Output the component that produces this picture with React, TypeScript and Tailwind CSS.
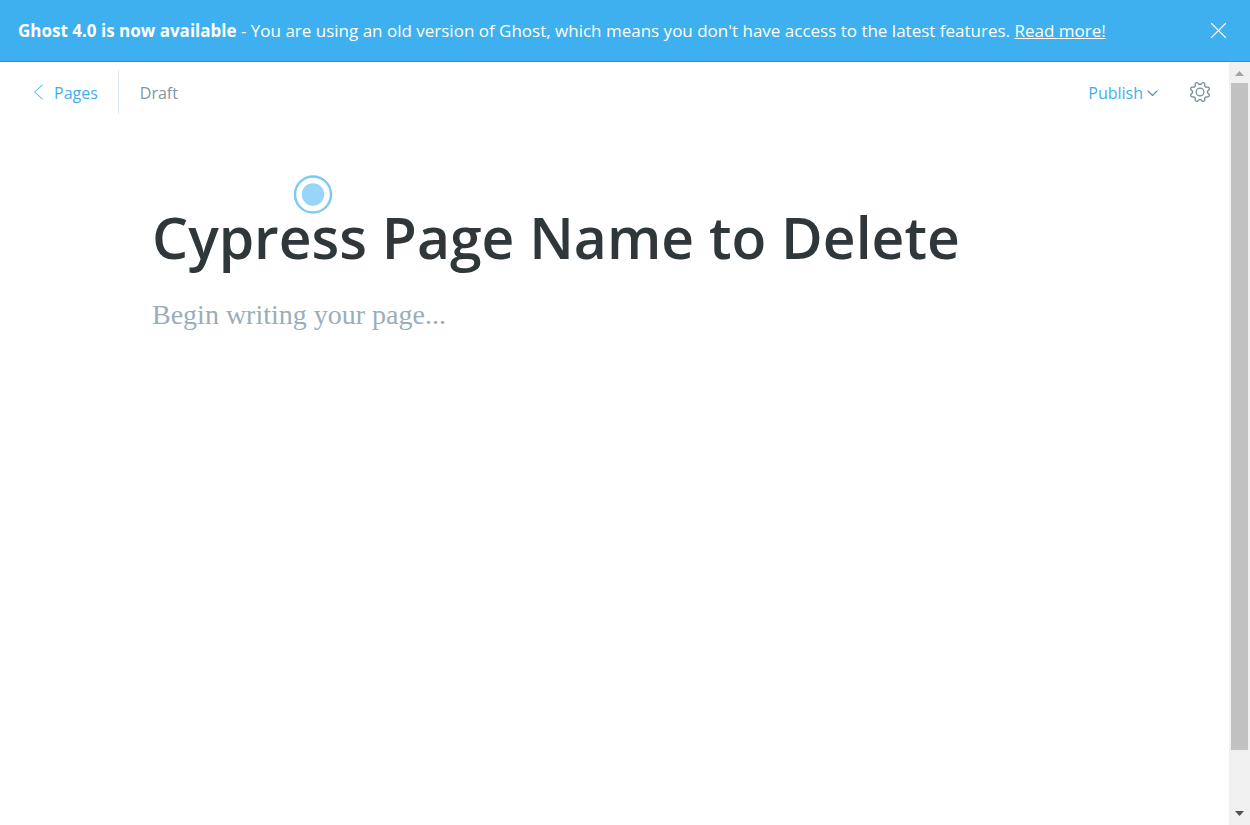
import React from "react";

function Banner() {
  return (
    <aside className="flex shrink-0 items-center justify-between border-b border-[#1896e2] bg-[#3eb0ef] pr-6 pl-[18px] text-[17px] text-white">
      <p className="pt-px leading-[60px] whitespace-nowrap">
        <strong className="font-bold">Ghost 4.0 is now available</strong>
        {" - You are using an old version of Ghost, which means you don't have access to the latest features. "}
        <a href="#upgrade" className="underline">Read more!</a>
      </p>
      <button type="button" aria-label="Dismiss">
        <svg className="size-[15px]" viewBox="0 0 15 15" fill="none" stroke="currentColor" strokeWidth="1.1" strokeLinecap="round">
          <path d="M.5.5l14 14M14.5.5l-14 14" />
        </svg>
      </button>
    </aside>
  );
}

function GearIcon() {
  return (
    <svg className="size-5" viewBox="0 0 24 24" overflow="visible" fill="none" stroke="currentColor" strokeWidth="1.5" strokeLinecap="round" strokeLinejoin="round">
      <path d="M10.546 2.438a1.957 1.957 0 0 0 2.908 0L14.4 1.4a1.959 1.959 0 0 1 3.41 1.413l-.071 1.4a1.958 1.958 0 0 0 2.051 2.054l1.4-.071a1.959 1.959 0 0 1 1.41 3.41l-1.042.94a1.96 1.96 0 0 0 0 2.909l1.042.94a1.959 1.959 0 0 1-1.413 3.41l-1.4-.071a1.958 1.958 0 0 0-2.056 2.056l.071 1.4A1.959 1.959 0 0 1 14.4 22.6l-.941-1.041a1.959 1.959 0 0 0-2.908 0L9.606 22.6A1.959 1.959 0 0 1 6.2 21.192l.072-1.4a1.958 1.958 0 0 0-2.056-2.056l-1.4.071A1.958 1.958 0 0 1 1.4 14.4l1.041-.94a1.96 1.96 0 0 0 0-2.909L1.4 9.606A1.958 1.958 0 0 1 2.812 6.2l1.4.071a1.958 1.958 0 0 0 2.058-2.06L6.2 2.81A1.959 1.959 0 0 1 9.606 1.4z" />
      <circle cx="12" cy="12" r="4.6" />
    </svg>
  );
}

function Toolbar() {
  return (
    <header className="flex items-center justify-between pt-2 pr-[19px] pl-[33px] text-base">
      <div className="flex items-center">
        <a href="#pages" className="flex h-11 items-center gap-[10px] border-r border-[#dfebf2] pr-5 text-[#3eb0ef]">
          <svg className="h-4 w-[11px]" viewBox="0 0 11 16" fill="none" stroke="currentColor" strokeLinecap="round" strokeLinejoin="round">
            <path d="M9.5 1L1.5 8l8 7" />
          </svg>
          <span className="pt-0.5">Pages</span>
        </a>
        <span className="pt-0.5 pl-[21px] text-[#7f97a1]">Draft</span>
      </div>
      <div className="flex items-center gap-[31px]">
        <button type="button" className="flex items-center gap-1 pt-0.5 text-[#3eb0ef]">
          <span>Publish</span>
          <svg className="h-2 w-3 text-[#5b8ba5]" viewBox="0 0 12 8" fill="none" stroke="currentColor" strokeWidth="1.1" strokeLinecap="round" strokeLinejoin="round">
            <path d="M1 2l4.5 4.5L10 2" />
          </svg>
        </button>
        <button type="button" aria-label="Settings" className="text-[#738a94]">
          <GearIcon />
        </button>
      </div>
    </header>
  );
}

function ClickMarker() {
  return (
    <svg className="absolute top-[-24px] left-[141px] size-10" viewBox="0 0 40 40" aria-hidden="true">
      <circle cx="20" cy="20.5" r="18" fill="#fff" stroke="#7bcaf4" strokeWidth="2.4" />
      <circle cx="20" cy="20.5" r="11.2" fill="#98d5f7" />
    </svg>
  );
}

function ScrollTrack() {
  return (
    <div className="flex w-[21px] shrink-0 flex-col items-center justify-between bg-[#f0f0f0]" aria-hidden="true">
      <svg className="h-[21px] w-[9px] shrink-0" viewBox="0 0 9 21" fill="#a3a3a3">
        <path d="M0 14l4.5-5L9 14z" />
      </svg>
      <div className="mb-[54px] w-[17px] grow bg-[#c1c1c1]" />
      <svg className="h-[21px] w-[9px] shrink-0" viewBox="0 0 9 21" fill="#505050">
        <path d="M0 7l4.5 5L9 7z" />
      </svg>
    </div>
  );
}

export default function App() {
  return (
    <div className="flex h-screen flex-col bg-white font-['Open_Sans','Noto_Sans',sans-serif]">
      <Banner />
      <div className="flex min-h-0 grow">
        <div className="flex min-w-0 grow flex-col">
          <Toolbar />
          <main className="flex grow flex-col px-[152px] pt-[84px]">
            <div className="relative">
              <input
                aria-label="Page title"
                defaultValue="Cypress Page Name to Delete"
                className="block h-20 w-full text-[57px] font-semibold text-[#2f373b] outline-none"
              />
              <ClickMarker />
            </div>
            <textarea
              aria-label="Page content"
              placeholder="Begin writing your page..."
              className="mt-[17px] w-full grow resize-none font-['Liberation_Serif',serif] text-[28px] leading-10 outline-none placeholder:text-[#9baeb8]"
            />
          </main>
        </div>
        <ScrollTrack />
      </div>
    </div>
  );
}
